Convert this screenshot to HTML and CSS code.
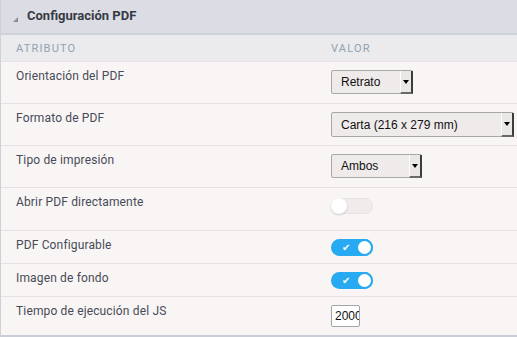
FILE: index.html
```html
<!DOCTYPE html>
<html lang="es">
<head>
<meta charset="utf-8">
<link rel="stylesheet" href="styles.css">
</head>
<body>
<section class="panel">
  <header class="panel-head">
    <span class="caret"></span>
    <h2 class="panel-title">Configuración PDF</h2>
  </header>
  <div class="cols">
    <div class="col-attr">ATRIBUTO</div>
    <div class="col-val">VALOR</div>
  </div>
  <div class="row row-select">
    <div class="label">Orientación del PDF</div>
    <div class="value"><div class="select w-retrato"><span class="sel-text">Retrato</span><span class="sel-btn"><span class="tri"></span></span></div></div>
  </div>
  <div class="row row-select">
    <div class="label">Formato de PDF</div>
    <div class="value"><div class="select w-carta"><span class="sel-text">Carta (216 x 279 mm)</span><span class="sel-btn"><span class="tri"></span></span></div></div>
  </div>
  <div class="row row-select">
    <div class="label">Tipo de impresión</div>
    <div class="value"><div class="select w-ambos"><span class="sel-text">Ambos</span><span class="sel-btn"><span class="tri"></span></span></div></div>
  </div>
  <div class="row row-off">
    <div class="label">Abrir PDF directamente</div>
    <div class="value"><div class="toggle off"><span class="knob"></span></div></div>
  </div>
  <div class="row row-toggle">
    <div class="label">PDF Configurable</div>
    <div class="value"><div class="toggle on"><span class="check">✔</span><span class="knob"></span></div></div>
  </div>
  <div class="row row-toggle">
    <div class="label">Imagen de fondo</div>
    <div class="value"><div class="toggle on"><span class="check">✔</span><span class="knob"></span></div></div>
  </div>
  <div class="row row-input">
    <div class="label">Tiempo de ejecución del JS</div>
    <div class="value"><input class="textbox" type="text" value="2000"></div>
  </div>
</section>
</body>
</html>
```

FILE: styles.css
```css
html, body {
  margin: 0;
  padding: 0;
  background: #f9f5f5;
}
body {
  font-family: Roboto, "Liberation Sans", Arial, sans-serif;
  width: 517px;
  height: 337px;
  overflow: hidden;
}
.panel {
  border-left: 1px solid #cdd1d9;
  border-bottom: 2px solid #c9ccd4;
  background: #f9f5f5;
  height: 335px;
  box-sizing: content-box;
}
.panel-head {
  background: #dcdde4;
  border-bottom: 2px solid #ced1d9;
  display: flex;
  align-items: center;
  padding-left: 12px;
  box-sizing: border-box;
  height: 35px;
}
.caret {
  width: 0;
  height: 0;
  border-left: 5px solid transparent;
  border-bottom: 5px solid #8b8e97;
  margin-right: 9px;
  margin-top: 5px;
}
.panel-title {
  margin: 0;
  font-size: 13px;
  font-weight: 700;
  color: #363a45;
  margin-top: -3px;
}
.cols {
  display: grid;
  grid-template-columns: 315px 1fr;
  height: 26px;
  align-items: center;
  padding-left: 15px;
  background: #ebeaed;
  font-size: 11px;
  letter-spacing: 1.2px;
  color: #8ea3b5;
  border-bottom: 1px solid #e6e3e8;
}
.row {
  display: grid;
  grid-template-columns: 315px 1fr;
  padding-left: 15px;
  border-bottom: 1px solid #e6e3e8;
  box-sizing: border-box;
}
.row-select { height: 42px; }
.row-off { height: 43px; }
.row-toggle { height: 33px; }
.row-input { height: 38px; border-bottom: none; }
.label {
  font-size: 12px;
  line-height: 14px;
  letter-spacing: 0.15px;
  color: #474b57;
  padding-top: 7px;
}
.value {
  padding-top: 8px;
}
.select {
  display: flex;
  height: 24px;
  box-sizing: border-box;
  border: 1px solid #a7a7a9;
  border-radius: 2px;
  background: #efebeb;
  font-family: "Liberation Sans", Arial, sans-serif;
  font-size: 12px;
  color: #111;
}
.w-retrato { width: 82px; }
.w-carta { width: 183px; height: 25px; }
.w-ambos { width: 91px; }
.sel-text {
  flex: 1;
  padding-left: 9px;
  display: flex;
  align-items: center;
}
.sel-btn {
  width: 10px;
  border-left: 1px solid #fdfdfd;
  border-right: 2px solid #3c3c3c;
  border-bottom: 2px solid #6a6a6a;
  background: #ebe7e7;
  display: flex;
  align-items: center;
  justify-content: center;
  margin: 0 -1px -1px 0;
}
.tri {
  width: 0;
  height: 0;
  border-left: 3px solid transparent;
  border-right: 3px solid transparent;
  border-top: 4px solid #000;
}
.toggle {
  position: relative;
  width: 42px;
  height: 17px;
  border-radius: 9px;
  box-sizing: border-box;
}
.toggle.on {
  background: #27aaf1;
}
.toggle.off {
  background: #f0ecec;
  border: 1px solid #e8e4e4;
  height: 16px;
  margin-top: 2px;
}
.knob {
  position: absolute;
  top: 0;
  width: 17px;
  height: 17px;
  border-radius: 50%;
  background: #fff;
  box-sizing: border-box;
}
.toggle.on .knob {
  right: 0;
  border: 2px solid #27aaf1;
}
.toggle.off .knob {
  left: -1px;
  top: -1px;
  width: 16px;
  height: 16px;
  box-shadow: 0 1px 2px rgba(0,0,0,0.18);
}
.check {
  position: absolute;
  left: 11px;
  top: 1px;
  font-size: 10px;
  line-height: 15px;
  color: #fff;
}
.textbox {
  display: block;
  margin: 0;
  width: 29px;
  height: 22px;
  box-sizing: border-box;
  border: 1px solid #a5a5a8;
  border-radius: 2px;
  background: #fff;
  font-family: "Liberation Sans", Arial, sans-serif;
  font-size: 12px;
  color: #111;
  padding: 0 0 0 3px;
  outline: none;
}
```
